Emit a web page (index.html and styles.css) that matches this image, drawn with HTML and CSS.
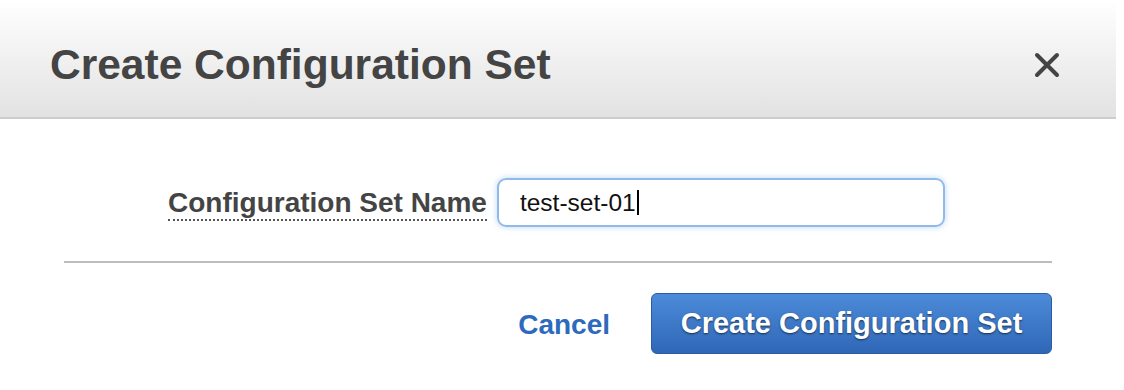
FILE: index.html
```html
<!DOCTYPE html>
<html lang="en">
<head>
    <meta charset="UTF-8">
    <title>Create Configuration Set</title>
    <link rel="stylesheet" href="styles.css">
</head>
<body>
    <div class="modal">
        <div class="modal-header">
            <h1 class="modal-title">Create Configuration Set</h1>
            <button class="close-btn" aria-label="Close">
                <svg width="26" height="26" viewBox="0 0 26 26">
                    <path d="M3 3 L23 23 M23 3 L3 23" stroke="#444" stroke-width="4" stroke-linecap="round"/>
                </svg>
            </button>
        </div>

        <div class="modal-body">
            <div class="form-row">
                <label class="form-label">Configuration Set Name</label>
                <div class="text-input">
                    <span>test-set-01</span><span class="caret"></span>
                </div>
            </div>
        </div>

        <hr class="divider">

        <div class="modal-footer">
            <a class="link-btn" href="#">Cancel</a>
            <button class="primary-btn">Create Configuration Set</button>
        </div>
    </div>
</body>
</html>
```

FILE: styles.css
```css
:root {
    --dark-text: #444;
    --link-blue: #2d69bd;
    --border-gray: #cdcdcd;
}

body {
    margin: 0;
    font-family: "Liberation Sans", Arial, Helvetica, sans-serif;
    color: var(--dark-text);
    background-color: #fff;
}

.modal-header {
    display: flex;
    align-items: center;
    justify-content: space-between;
    height: 117px;
    padding: 0 56px 0 50px;
    background: linear-gradient(#ffffff, #e2e2e2);
    border-bottom: 2px solid var(--border-gray);
    margin-right: 8px;
}

.modal-title {
    margin: 0;
    font-size: 42.5px;
    font-weight: bold;
    color: var(--dark-text);
    padding-top: 12px;
}

.close-btn {
    background: none;
    border: none;
    padding: 0;
    margin-top: 12px;
    cursor: pointer;
    display: flex;
}

.modal-body {
    padding: 59px 0 0 0;
}

.form-row {
    display: flex;
    align-items: center;
    gap: 10px;
    padding-left: 168px;
}

.form-label {
    font-size: 28px;
    font-weight: bold;
    color: var(--dark-text);
    line-height: 32px;
    border-bottom: 2px dotted #555;
    margin-top: 2px;
}

.text-input {
    box-sizing: border-box;
    width: 448px;
    height: 49px;
    border: 2px solid #8fbaea;
    border-radius: 9px;
    box-shadow: 0 0 6px rgba(110, 165, 230, 0.45);
    padding-left: 21px;
    display: flex;
    align-items: center;
    font-size: 24.5px;
    color: #111;
}

.caret {
    display: inline-block;
    width: 2px;
    height: 25px;
    background-color: #000;
    margin-left: 1px;
}

.divider {
    border: 0;
    height: 2px;
    background-color: #bdbdbd;
    margin: 34px 72px 0 64px;
}

.modal-footer {
    display: flex;
    align-items: center;
    justify-content: flex-end;
    gap: 41px;
    padding: 30px 72px 0 0;
}

.link-btn {
    font-size: 28px;
    font-weight: bold;
    color: var(--link-blue);
    text-decoration: none;
    padding-top: 2px;
}

.primary-btn {
    box-sizing: border-box;
    width: 401px;
    height: 61px;
    border: 1px solid #2a5ca3;
    border-radius: 6px;
    background: linear-gradient(#4c8bd9, #2f67b7);
    color: #fff;
    font-family: inherit;
    font-size: 29px;
    font-weight: bold;
    text-shadow: 0 1px 2px rgba(0, 0, 0, 0.6);
    cursor: pointer;
    padding: 0;
}
```
